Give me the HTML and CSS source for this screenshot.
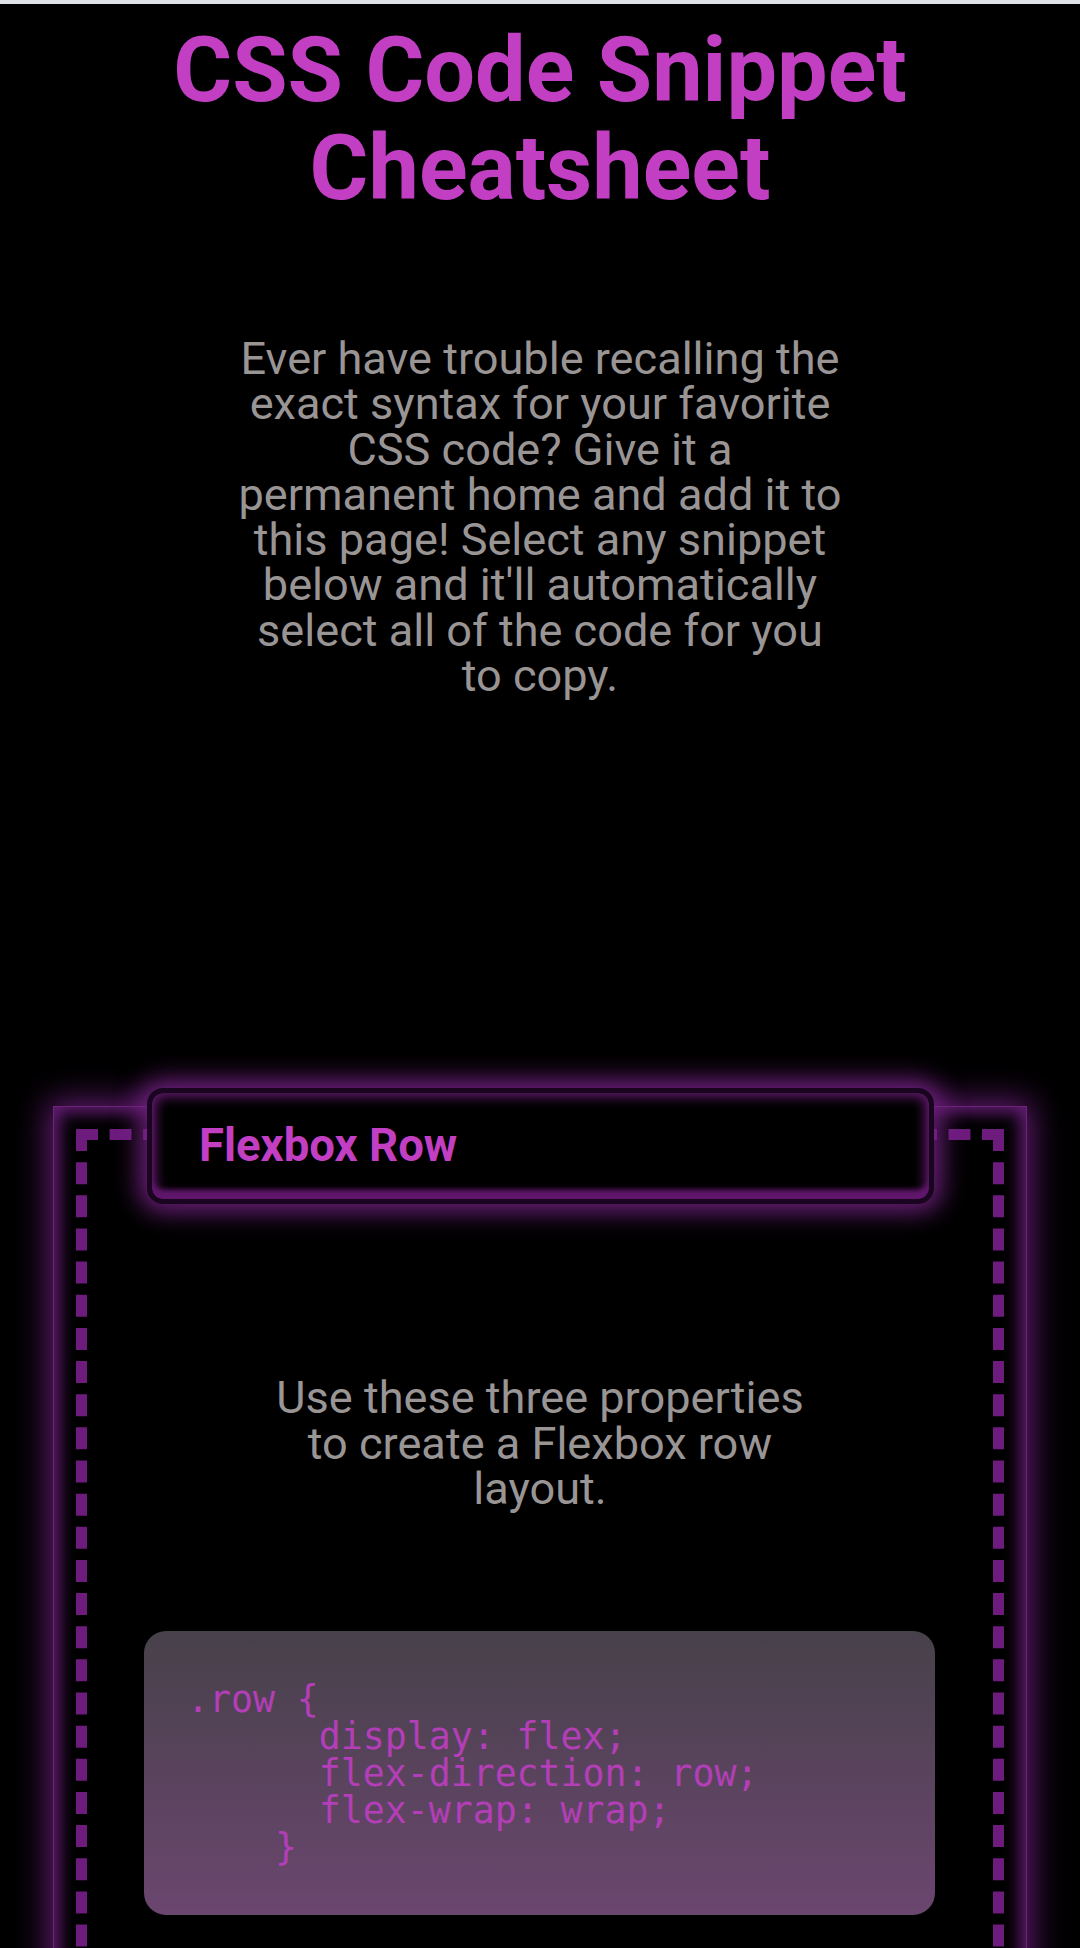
FILE: index.html
```html
<!DOCTYPE html>
<html lang="en">
<head>
<meta charset="utf-8">
<title>CSS Code Snippet Cheatsheet</title>
<link rel="stylesheet" href="styles.css">
</head>
<body>
<div class="topbar"></div>
<header class="hero">
  <h1 class="title">CSS Code Snippet Cheatsheet</h1>
  <p class="intro">Ever have trouble recalling the exact syntax for your favorite CSS code? Give it a permanent home and add it to this page! Select any snippet below and it'll automatically select all of the code for you to copy.</p>
</header>
<main class="snippets">
  <section class="card">
    <div class="card-frame">
      <h2 class="card-title">Flexbox Row</h2>
      <p class="card-desc">Use these three properties to create a Flexbox row layout.</p>
      <pre class="code">.row {
      display: flex;
      flex-direction: row;
      flex-wrap: wrap;
    }</pre>
    </div>
  </section>
</main>
</body>
</html>
```
FILE: styles.css
```css
html, body {
  margin: 0;
  padding: 0;
  background: #000;
}
body {
  font-family: Roboto, "Noto Sans", sans-serif;
  overflow: hidden;
}
.topbar {
  height: 4px;
  background: #dfe3e7;
}
.hero {
  display: flex;
  flex-direction: column;
  align-items: center;
}
.title {
  margin: 18px 0 0;
  font-size: 90px;
  line-height: 98px;
  font-weight: 700;
  color: #c23fc3;
  text-align: center;
  max-width: 900px;
}
.intro {
  margin: 118px 0 0;
  width: 604px;
  font-size: 45.1px;
  line-height: 45.3px;
  font-weight: 400;
  color: #9a9595;
  text-align: center;
}
.snippets {
  margin-top: 408px;
}
.card {
  margin: 0 53px;
  padding: 22px 22px 0;
  border: 1px solid #6b2478;
  box-shadow: 0 0 30px 5px rgba(108, 30, 124, 0.9), inset 0 0 16px 6px rgba(108, 30, 124, 0.9);
}
.card-frame {
  border: 11px dashed #6e1b7e;
  padding: 0 0 120px;
}
.card-title {
  box-sizing: border-box;
  width: 787px;
  margin: -52px 0 0 60px;
  padding: 26px 47px;
  border: 5px solid #1a0520;
  border-radius: 16px;
  background: #000;
  font-size: 45.5px;
  line-height: 54px;
  font-weight: 700;
  color: #c23fc3;
  box-shadow: 0 0 24px 8px rgba(116, 34, 132, 0.92), inset 0 -9px 5px rgba(96, 22, 108, 1), inset 0 0 12px 4px rgba(100, 26, 112, 0.95);
}
.card-desc {
  width: 540px;
  margin: 171px auto 0;
  font-size: 45.1px;
  line-height: 45.3px;
  color: #9a9595;
  text-align: center;
}
.code {
  box-sizing: border-box;
  margin: 120px 58px 0 57px;
  padding: 50px 43px 49px;
  border-radius: 22px;
  background: linear-gradient(180deg, #47414a 0%, #6b466f 100%);
  font-family: "DejaVu Sans Mono", "Liberation Mono", monospace;
  font-size: 36.5px;
  line-height: 37px;
  color: #b33eb8;
  white-space: pre;
}
```
